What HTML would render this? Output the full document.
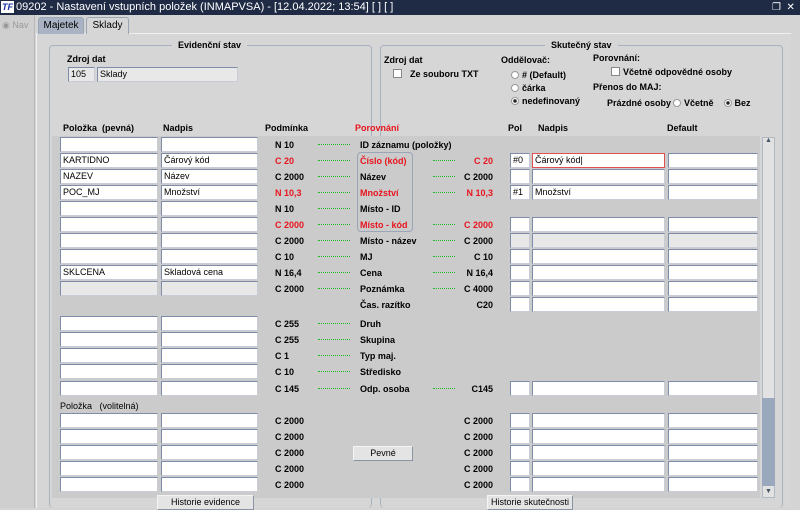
<!DOCTYPE html>
<html><head><meta charset="utf-8"><style>
*{box-sizing:border-box;margin:0;padding:0}
body{width:800px;height:508px;overflow:hidden;background:#d4d4d4;font-family:"Liberation Sans",Arial,sans-serif;font-size:9px;color:#000;position:relative}
.abs{position:absolute}
.title{left:0;top:0;width:800px;height:15px;background:#1f2b45;color:#fff;font-size:11px;line-height:15px;padding-left:16px}
.logo{left:1px;top:1px;width:13px;height:12px;background:#fff;color:#1a2fa8;font-weight:bold;font-style:italic;font-size:9px;line-height:12px;text-align:center}
.strip{left:0;top:15px;width:35px;height:493px;background:#cfcfcf;border-right:1px solid #b8b8b8}
.tab{top:17px;height:17px;font-size:10px;line-height:16px;text-align:center;border:1px solid #9aa5b5;border-bottom:none;border-radius:3px 3px 0 0}
.main{left:36px;top:33px;width:755px;height:475px;background:#d6d6d6;border-top:1px solid #f0f0f0;border-left:1px solid #f0f0f0}
.fs{border:1px solid #a9b2c0;border-radius:4px;border-bottom:none}
.lg{background:#d6d6d6;padding:0 6px;font-weight:bold;font-size:9px}
.b{font-weight:bold}
.band{left:52px;top:136px;width:708px;height:362px;background:#cbcbcb}
.i{position:absolute;height:15px;background:#fff;border:1px solid #7d8ca8;border-right-color:#c8ccd4;border-bottom-color:#c8ccd4;padding-left:2px;font-size:9px;line-height:13px}
.g{background:#e8e8e8}
.r{position:absolute;left:0;width:800px;height:16px}
.r .a{left:60px;width:98px}.r .c{left:161px;width:97px}
.r .p{left:510px;width:20px}.r .n{left:532px;width:133px}.r .d{left:668px;width:90px}
.t{position:absolute;left:275px;top:3px;font-weight:bold}
.dt{position:absolute;left:318px;top:7px;width:32px;border-top:1px dotted #1fb81f}
.dt2{position:absolute;left:433px;top:7px;width:22px;border-top:1px dotted #1fb81f}
.nm{position:absolute;left:360px;top:3px;font-weight:bold}
.t2{position:absolute;right:307px;top:3px;font-weight:bold}
.red{color:#e8141e}
.btn{position:absolute;background:#e4e4e4;border:1px solid #8a93a3;border-top-color:#f4f4f4;border-left-color:#f4f4f4;text-align:center;font-size:9px}
.rad{display:inline-block;width:8px;height:8px;border-radius:50%;background:#fff;border:1px solid #999;vertical-align:-1px;margin-right:3px}
.rad.on{background:radial-gradient(#222 40%,#fff 45%)}
.cb{display:inline-block;width:9px;height:9px;background:#fff;border:1px solid #888;vertical-align:-1px;margin-right:3px}
</style></head><body>
<div class="abs title">09202 - Nastavení vstupních položek (INMAPVSA) - [12.04.2022; 13:54]  [ ]  [ ]</div>
<div class="abs logo">TF</div>
<div class="abs" style="left:772px;top:2px;color:#fff;font-size:10px">❐&nbsp;&nbsp;✕</div>
<div class="abs strip"></div>
<div class="abs" style="left:2px;top:20px;color:#999;font-size:9px">◉ Nav</div>
<div class="abs main"></div>
<div class="abs tab" style="left:38px;width:46px;background:#a9b3c3">Majetek</div>
<div class="abs tab" style="left:86px;width:43px;background:#d6d6d6">Sklady</div>

<div class="abs fs" style="left:49px;top:45px;width:323px;height:463px"></div>
<div class="abs lg" style="left:172px;top:40px">Evidenční stav</div>
<div class="abs fs" style="left:380px;top:45px;width:403px;height:463px"></div>
<div class="abs lg" style="left:545px;top:40px">Skutečný stav</div>

<div class="abs b" style="left:67px;top:54px">Zdroj dat</div>
<div class="i g" style="left:68px;top:67px;width:27px">105</div>
<div class="i g" style="left:97px;top:67px;width:141px">Sklady</div>

<div class="abs b" style="left:384px;top:55px">Zdroj dat</div>
<div class="abs b" style="left:393px;top:69px"><span class="cb"></span>&nbsp;&nbsp;Ze souboru TXT</div>
<div class="abs b" style="left:501px;top:55px">Oddělovač:</div>
<div class="abs b" style="left:511px;top:70px"><span class="rad"></span># (Default)</div>
<div class="abs b" style="left:511px;top:83px"><span class="rad"></span>čárka</div>
<div class="abs b" style="left:511px;top:96px"><span class="rad on"></span>nedefinovaný</div>
<div class="abs b" style="left:593px;top:53px">Porovnání:</div>
<div class="abs b" style="left:611px;top:67px"><span class="cb"></span>Včetně odpovědné osoby</div>
<div class="abs b" style="left:593px;top:82px">Přenos do MAJ:</div>
<div class="abs b" style="left:607px;top:98px">Prázdné osoby<span class="rad" style="margin-left:2px"></span>Včetně&nbsp;&nbsp;&nbsp;&nbsp;<span class="rad on"></span>Bez</div>

<div class="abs b" style="left:63px;top:123px">Položka &nbsp;(pevná)</div>
<div class="abs b" style="left:163px;top:123px">Nadpis</div>
<div class="abs b" style="left:265px;top:123px">Podmínka</div>
<div class="abs b red" style="left:355px;top:123px">Porovnání</div>
<div class="abs b" style="left:508px;top:123px">Pol</div>
<div class="abs b" style="left:538px;top:123px">Nadpis</div>
<div class="abs b" style="left:667px;top:123px">Default</div>

<div class="abs band"></div>
<div class="abs" style="left:357px;top:152px;width:56px;height:80px;border:1px solid #9aa6b8;border-radius:4px"></div>
<div class="abs" style="left:762px;top:137px;width:13px;height:361px;background:#e2e2e2;border:1px solid #b0b8c4"></div>
<div class="abs" style="left:762px;top:398px;width:13px;height:88px;background:#9aa8bd"></div>
<div class="abs" style="left:765px;top:137px;font-size:7px;color:#456">▲</div>
<div class="abs" style="left:765px;top:488px;font-size:7px;color:#456">▼</div>

<div class="r" style="top:137px"><div class="i a"></div><div class="i c"></div><span class="t">N 10</span><span class="dt"></span><span class="nm">ID záznamu (položky)</span></div>
<div class="r" style="top:153px"><div class="i a">KARTIDNO</div><div class="i c">Čárový kód</div><span class="t red">C 20</span><span class="dt"></span><span class="nm red">Číslo (kód)</span><span class="dt2"></span><span class="t2 red">C 20</span><div class="i p">#0</div><div class="i n" style="border:1px solid #e05050">Čárový kód|</div><div class="i d"></div></div>
<div class="r" style="top:169px"><div class="i a">NAZEV</div><div class="i c">Název</div><span class="t">C 2000</span><span class="dt"></span><span class="nm">Název</span><span class="dt2"></span><span class="t2">C 2000</span><div class="i p"></div><div class="i n"></div><div class="i d"></div></div>
<div class="r" style="top:185px"><div class="i a">POC_MJ</div><div class="i c">Množství</div><span class="t red">N 10,3</span><span class="dt"></span><span class="nm red">Množství</span><span class="dt2"></span><span class="t2 red">N 10,3</span><div class="i p">#1</div><div class="i n">Množství</div><div class="i d"></div></div>
<div class="r" style="top:201px"><div class="i a"></div><div class="i c"></div><span class="t">N 10</span><span class="dt"></span><span class="nm">Místo - ID</span></div>
<div class="r" style="top:217px"><div class="i a"></div><div class="i c"></div><span class="t red">C 2000</span><span class="dt"></span><span class="nm red">Místo - kód</span><span class="dt2"></span><span class="t2 red">C 2000</span><div class="i p"></div><div class="i n"></div><div class="i d"></div></div>
<div class="r" style="top:233px"><div class="i a"></div><div class="i c"></div><span class="t">C 2000</span><span class="dt"></span><span class="nm">Místo - název</span><span class="dt2"></span><span class="t2">C 2000</span><div class="i p g"></div><div class="i n g"></div><div class="i d g"></div></div>
<div class="r" style="top:249px"><div class="i a"></div><div class="i c"></div><span class="t">C 10</span><span class="dt"></span><span class="nm">MJ</span><span class="dt2"></span><span class="t2">C 10</span><div class="i p"></div><div class="i n"></div><div class="i d"></div></div>
<div class="r" style="top:265px"><div class="i a">SKLCENA</div><div class="i c">Skladová cena</div><span class="t">N 16,4</span><span class="dt"></span><span class="nm">Cena</span><span class="dt2"></span><span class="t2">N 16,4</span><div class="i p"></div><div class="i n"></div><div class="i d"></div></div>
<div class="r" style="top:281px"><div class="i a g"></div><div class="i c g"></div><span class="t">C 2000</span><span class="dt"></span><span class="nm">Poznámka</span><span class="dt2"></span><span class="t2">C 4000</span><div class="i p"></div><div class="i n"></div><div class="i d"></div></div>
<div class="r" style="top:297px"><span class="nm">Čas. razítko</span><span class="t2">C20</span><div class="i p"></div><div class="i n"></div><div class="i d"></div></div>
<div class="r" style="top:316px"><div class="i a"></div><div class="i c"></div><span class="t">C 255</span><span class="dt"></span><span class="nm">Druh</span></div>
<div class="r" style="top:332px"><div class="i a"></div><div class="i c"></div><span class="t">C 255</span><span class="dt"></span><span class="nm">Skupina</span></div>
<div class="r" style="top:348px"><div class="i a"></div><div class="i c"></div><span class="t">C 1</span><span class="dt"></span><span class="nm">Typ maj.</span></div>
<div class="r" style="top:364px"><div class="i a"></div><div class="i c"></div><span class="t">C 10</span><span class="dt"></span><span class="nm">Středisko</span></div>
<div class="r" style="top:381px"><div class="i a"></div><div class="i c"></div><span class="t">C 145</span><span class="dt"></span><span class="nm">Odp. osoba</span><span class="dt2"></span><span class="t2">C145</span><div class="i p"></div><div class="i n"></div><div class="i d"></div></div>
<div class="abs" style="left:60px;top:401px">Položka &nbsp;&nbsp;(volitelná)</div>
<div class="r" style="top:413px"><div class="i a"></div><div class="i c"></div><span class="t">C 2000</span><span class="t2">C 2000</span><div class="i p"></div><div class="i n"></div><div class="i d"></div></div>
<div class="r" style="top:429px"><div class="i a"></div><div class="i c"></div><span class="t">C 2000</span><span class="t2">C 2000</span><div class="i p"></div><div class="i n"></div><div class="i d"></div></div>
<div class="r" style="top:445px"><div class="i a"></div><div class="i c"></div><span class="t">C 2000</span><span class="t2">C 2000</span><div class="i p"></div><div class="i n"></div><div class="i d"></div></div>
<div class="r" style="top:461px"><div class="i a"></div><div class="i c"></div><span class="t">C 2000</span><span class="t2">C 2000</span><div class="i p"></div><div class="i n"></div><div class="i d"></div></div>
<div class="r" style="top:477px"><div class="i a"></div><div class="i c"></div><span class="t">C 2000</span><span class="t2">C 2000</span><div class="i p"></div><div class="i n"></div><div class="i d"></div></div>
<div class="btn" style="left:353px;top:446px;width:60px;height:15px;line-height:13px">Pevné</div>
<div class="btn" style="left:157px;top:495px;width:97px;height:15px;line-height:13px">Historie evidence</div>
<div class="btn" style="left:487px;top:495px;width:86px;height:15px;line-height:13px">Historie skutečnosti</div>
</body></html>
